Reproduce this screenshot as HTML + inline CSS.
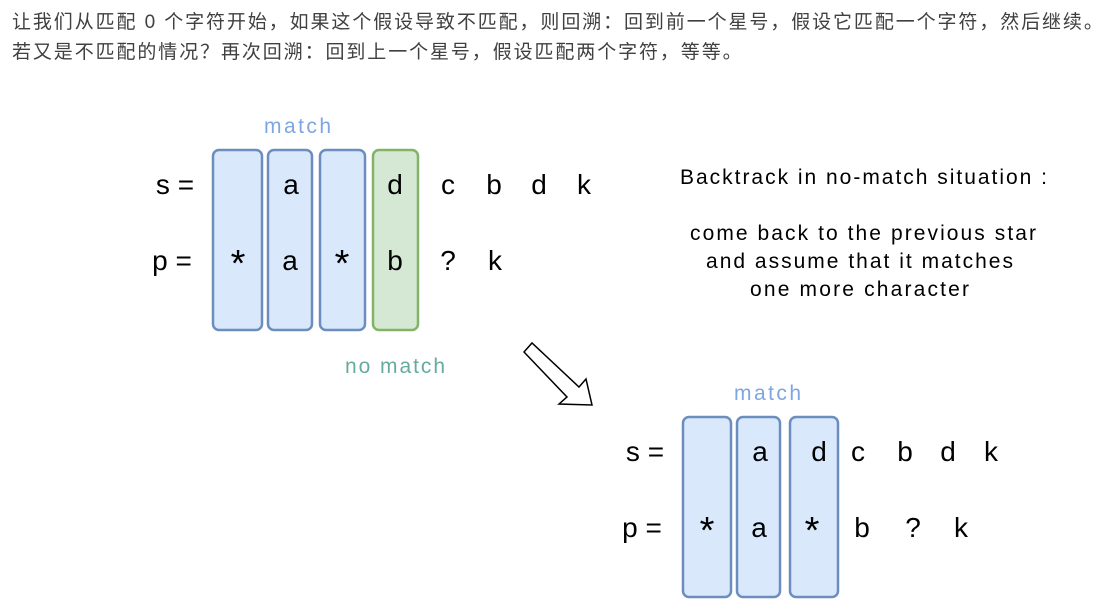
<!DOCTYPE html>
<html><head><meta charset="utf-8"><style>
body{margin:0;background:#fff;width:1117px;height:611px;overflow:hidden;position:relative}
.t{position:absolute;left:12px;font:19px "Liberation Sans","Noto Sans CJK SC",sans-serif;color:#404040;white-space:nowrap;letter-spacing:1.9px}
svg{position:absolute;left:0;top:0}
svg text{font-family:"Liberation Sans",sans-serif}
</style></head><body>
<div class="t" style="top:7px">让我们从匹配 0 个字符开始，如果这个假设导致不匹配，则回溯：回到前一个星号，假设它匹配一个字符，然后继续。</div>
<div class="t" style="top:37px">若又是不匹配的情况？再次回溯：回到上一个星号，假设匹配两个字符，等等。</div>
<svg width="1117" height="611">
<g stroke-width="2.5">
<rect x="213" y="150" width="49" height="180" rx="6" fill="#dae8fc" stroke="#6c8ebf"/>
<rect x="268" y="150" width="44" height="180" rx="6" fill="#dae8fc" stroke="#6c8ebf"/>
<rect x="320" y="150" width="45" height="180" rx="6" fill="#dae8fc" stroke="#6c8ebf"/>
<rect x="373" y="150" width="45" height="180" rx="6" fill="#d5e8d4" stroke="#82b366"/>
<rect x="683" y="417" width="48" height="180" rx="6" fill="#dae8fc" stroke="#6c8ebf"/>
<rect x="737" y="417" width="43" height="180" rx="6" fill="#dae8fc" stroke="#6c8ebf"/>
<rect x="790" y="417" width="48" height="180" rx="6" fill="#dae8fc" stroke="#6c8ebf"/>
</g>
<g font-size="28" fill="#000" text-anchor="middle">
<text x="175" y="194">s =</text><text x="172" y="270">p =</text>
<text x="291" y="194">a</text><text x="395" y="194">d</text><text x="448" y="194">c</text><text x="494" y="194">b</text><text x="539" y="194">d</text><text x="584" y="194">k</text>
<text x="290" y="270">a</text><text x="395" y="270">b</text><text x="448" y="270">?</text><text x="495" y="270">k</text>
<text x="645" y="461">s =</text><text x="642" y="537">p =</text>
<text x="760" y="461">a</text><text x="819" y="461">d</text><text x="858" y="461">c</text><text x="905" y="461">b</text><text x="948" y="461">d</text><text x="991" y="461">k</text>
<text x="759" y="537">a</text><text x="862" y="537">b</text><text x="913" y="537">?</text><text x="961" y="537">k</text>
</g>
<g font-size="38" fill="#000" text-anchor="middle">
<text x="238" y="276">*</text><text x="342" y="276">*</text>
<text x="707" y="543">*</text><text x="812" y="543">*</text>
</g>
<g font-size="21">
<text x="264" y="133" fill="#7ea6e0" textLength="67">match</text>
<text x="345" y="373" fill="#67ab9f" textLength="100">no match</text>
<text x="734" y="400" fill="#7ea6e0" textLength="67">match</text>
<text x="680" y="184" fill="#000" textLength="367">Backtrack in no-match situation :</text>
<text x="690" y="240" fill="#000" textLength="346">come back to the previous star</text>
<text x="706" y="268" fill="#000" textLength="307">and assume that it matches</text>
<text x="750" y="296" fill="#000" textLength="219">one more character</text>
</g>
<path d="M524,352 L532,343 L579,387 L586,379 L592,405 L559,404 L567,397 Z" fill="#fff" stroke="#000" stroke-width="1.5"/>
</svg>
</body></html>
